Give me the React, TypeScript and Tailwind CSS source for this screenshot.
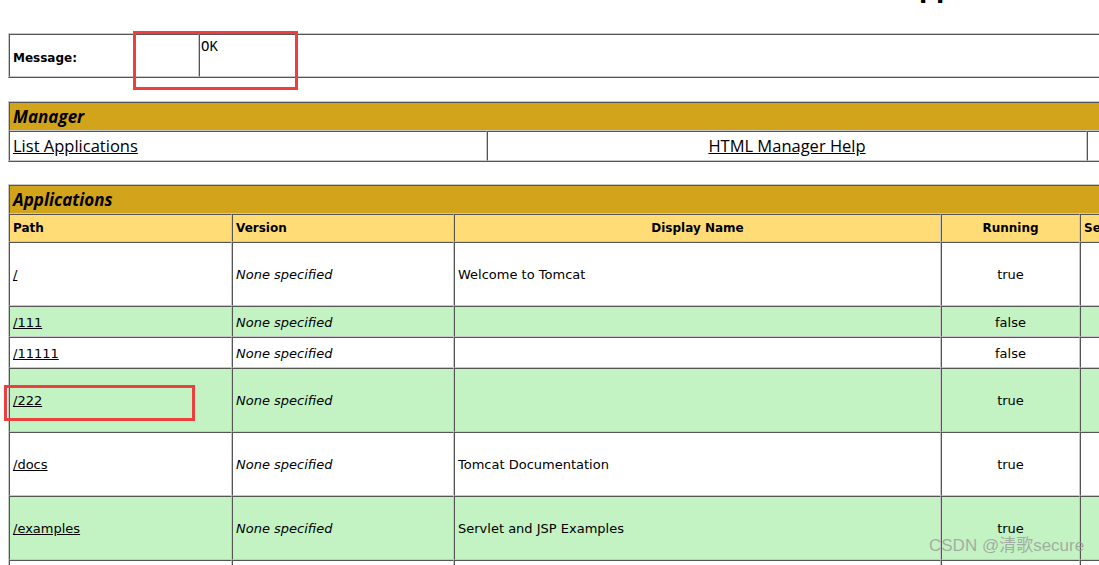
const apps = [
  { path: "/", name: "Welcome to Tomcat", running: "true", h: "h-[64px]", green: false },
  { path: "/111", name: "", running: "false", h: "h-[31px]", green: true },
  { path: "/11111", name: "", running: "false", h: "h-[31px]", green: false },
  { path: "/222", name: "", running: "true", h: "h-[64px]", green: true },
  { path: "/docs", name: "Tomcat Documentation", running: "true", h: "h-[64px]", green: false },
  { path: "/examples", name: "Servlet and JSP Examples", running: "true", h: "h-[64px]", green: true },
  { path: "/host-manager", name: "Tomcat Host Manager Application", running: "true", h: "h-[64px]", green: false },
];

const tableCls =
  "table-fixed border-separate border-spacing-0 border border-solid border-t-[#c8c8c8] border-l-[#c8c8c8] border-r-[#555] border-b-[#555]";
const cell =
  "border border-solid border-t-[#555] border-l-[#555] border-r-[#c8c8c8] border-b-[#c8c8c8] px-[3px]";

export default function App() {
  return (
    <div className="relative w-[1099px] h-[565px] overflow-hidden bg-white text-black font-['DejaVu_Sans',sans-serif]">
      <div className="h-[6px] overflow-hidden">
        <div className="pl-[728px] -mt-[24px] text-[24px] leading-[29px] font-bold whitespace-nowrap">
          Tomcat Web Application Manager
        </div>
      </div>

      <div className="pl-[8px]">
        {/* message */}
        <table className={`${tableCls} mt-[27px] w-[1392px]`}>
          <colgroup>
            <col className="w-[190px]" />
            <col className="w-[1200px]" />
          </colgroup>
          <tbody>
            <tr>
              <td className={`${cell} h-[43px] align-middle pt-[4px] text-[12px] font-bold`}>Message:</td>
              <td className={`${cell} align-top pl-[1px] pt-[4px]`}>
                <pre className="m-0 font-['Liberation_Mono',monospace] text-[14px] leading-[16px]">OK</pre>
              </td>
            </tr>
          </tbody>
        </table>

        {/* manager */}
        <table className={`${tableCls} mt-[23px] w-[1480px]`}>
          <colgroup>
            <col className="w-[478px]" />
            <col className="w-[600px]" />
            <col className="w-[400px]" />
          </colgroup>
          <tbody>
            <tr>
              <td
                colSpan={3}
                className={`${cell} h-[29px] bg-[#D2A41C] font-['Open_Sans',sans-serif] text-[17px] font-bold italic leading-[20px]`}
              >
                Manager
              </td>
            </tr>
            <tr className="font-['Open_Sans',sans-serif] text-[16.5px]">
              <td className={`${cell} h-[30px]`}>
                <a href="#" className="underline">List Applications</a>
              </td>
              <td className={`${cell} text-center`}>
                <a href="#" className="underline">HTML Manager Help</a>
              </td>
              <td className={`${cell} text-center`}>
                <a href="#" className="underline">Manager Help</a>
              </td>
            </tr>
          </tbody>
        </table>

        {/* applications */}
        <table className={`${tableCls} mt-[22px] w-[1373px]`}>
          <colgroup>
            <col className="w-[223px]" />
            <col className="w-[222px]" />
            <col className="w-[487px]" />
            <col className="w-[139px]" />
            <col className="w-[300px]" />
          </colgroup>
          <tbody>
            <tr>
              <td
                colSpan={5}
                className={`${cell} h-[29px] bg-[#D2A41C] font-['Open_Sans',sans-serif] text-[17px] font-bold italic leading-[20px]`}
              >
                Applications
              </td>
            </tr>
            <tr className="bg-[#FFDC75] text-[12px] font-bold">
              <td className={`${cell} h-[28px]`}>Path</td>
              <td className={cell}>Version</td>
              <td className={`${cell} text-center`}>Display Name</td>
              <td className={`${cell} text-center`}>Running</td>
              <td className={`${cell} text-left`}>Sessions</td>
            </tr>
            {apps.map((a, i) => (
              <tr key={i} className={`text-[13px] ${a.green ? "bg-[#C3F3C3]" : "bg-white"}`}>
                <td className={`${cell} ${a.h} pt-[2px]`}>
                  <a href="#" className="underline">{a.path}</a>
                </td>
                <td className={`${cell} italic pt-[2px]`}>None specified</td>
                <td className={`${cell} pt-[2px]`}>{a.name}</td>
                <td className={`${cell} text-center pt-[2px]`}>{a.running}</td>
                <td className={`${cell} text-center pt-[2px]`}>
                  <a href="#" className="underline">0</a>
                </td>
              </tr>
            ))}
          </tbody>
        </table>
      </div>

      {/* annotations */}
      <div className="absolute left-[133px] top-[31px] w-[165px] h-[59px] border-[3px] border-[#ef3e3e]" />
      <div className="absolute left-[4px] top-[385px] w-[191px] h-[36px] border-[3px] border-[#ef3e3e]" />
      <div className="absolute left-[929px] top-[536px] text-[17px] leading-[20px] text-[#9a9a9a]/80 font-['Liberation_Sans','Noto_Sans_CJK_SC',sans-serif] whitespace-nowrap">
        CSDN @清歌secure
      </div>
    </div>
  );
}
